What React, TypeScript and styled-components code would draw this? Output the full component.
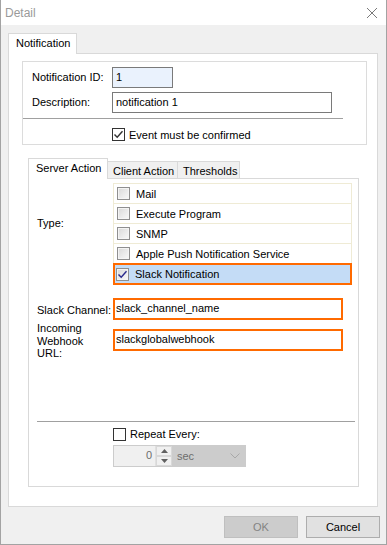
import React from "react";
import styled, { createGlobalStyle } from "styled-components";

const Global = createGlobalStyle`
  html, body { margin: 0; padding: 0; background: #ffffff; }
  body { font-family: "Liberation Sans", Arial, sans-serif; font-size: 11px; color: #000; }
  * { box-sizing: border-box; }
`;

const Window = styled.div`
  width: 387px;
  height: 545px;
  display: flex;
  flex-direction: column;
  border: 1px solid #a3a3a3;
  border-top: none;
  background: #f0f0f0;
  overflow: hidden;
`;

const TitleBar = styled.div`
  height: 25px;
  flex: none;
  background: #ffffff;
  display: flex;
  align-items: center;
  justify-content: space-between;
  padding: 0 8px 0 4px;
  color: #9a9a9a;
  font-size: 12px;
`;

const Body = styled.div`
  flex: 1;
  display: flex;
  flex-direction: column;
  padding: 8px 8px 6px 7px;
`;

const TabStrip = styled.div`
  display: flex;
  align-items: flex-end;
  height: 21px;
  margin-bottom: -1px;
  position: relative;
  z-index: 1;
`;

const Tab = styled.div<{ $active?: boolean; $w: number }>`
  width: ${(p) => p.$w}px;
  height: ${(p) => (p.$active ? 21 : 18)}px;
  background: ${(p) => (p.$active ? "#ffffff" : "#f0f0f0")};
  border: 1px solid #d9d9d9;
  border-bottom: ${(p) => (p.$active ? "none" : "1px solid #d9d9d9")};
  margin-left: ${(p) => (p.$active ? 0 : -1)}px;
  padding: ${(p) => (p.$active ? "3px 0 0 7px" : "3px 0 0 5px")};
  white-space: nowrap;
  font-size: 11px;
`;

const TabPage = styled.div<{ $h: number; $w: number }>`
  width: ${(p) => p.$w}px;
  height: ${(p) => p.$h}px;
  background: #ffffff;
  border: 1px solid #d9d9d9;
  display: flex;
  flex-direction: column;
`;

const OuterPage = styled(TabPage)`
  padding: 7px 0 0 13px;
`;

const GroupBox = styled.div`
  width: 345px;
  height: 84px;
  border: 1px solid #dcdcdc;
  padding-top: 5px;
  display: flex;
  flex-direction: column;
`;

const FieldRow = styled.div<{ $gap?: number }>`
  display: flex;
  align-items: center;
  padding-left: 9px;
  margin-top: ${(p) => p.$gap ?? 0}px;
`;

const Label = styled.div<{ $w: number }>`
  width: ${(p) => p.$w}px;
  flex: none;
  line-height: 12.5px;
`;

const TextBox = styled.div<{ $w: number; $bg?: string; $orange?: boolean }>`
  width: ${(p) => p.$w}px;
  height: ${(p) => (p.$orange ? 22 : 21)}px;
  border: ${(p) => (p.$orange ? "2px solid #ff6a00" : "1px solid #7a7a7a")};
  background: ${(p) => p.$bg ?? "#ffffff"};
  padding: ${(p) => (p.$orange ? "2px 0 0 1px" : "3px 0 0 3px")};
  white-space: nowrap;
  overflow: hidden;
`;

const Separator = styled.div<{ $w: number; $top: number; $left?: number }>`
  width: ${(p) => p.$w}px;
  height: 1px;
  background: #a0a0a0;
  margin-top: ${(p) => p.$top}px;
  margin-left: ${(p) => p.$left ?? 0}px;
`;

const CheckRow = styled.label<{ $left: number; $top: number }>`
  display: flex;
  align-items: center;
  gap: 4px;
  margin-left: ${(p) => p.$left}px;
  margin-top: ${(p) => p.$top}px;
  height: 13px;
  font-size: 11px;
`;

const Box = styled.span<{ $classic?: boolean }>`
  width: 13px;
  height: 13px;
  flex: none;
  display: inline-flex;
  align-items: center;
  justify-content: center;
  border: 1px solid ${(p) => (p.$classic ? "#8f8f8f" : "#333333")};
  background: ${(p) =>
    p.$classic
      ? "linear-gradient(135deg, #d8d8d8 0%, #ececec 60%, #f8f8f8 100%)"
      : "#ffffff"};
  box-shadow: ${(p) => (p.$classic ? "inset 0 0 0 1px #f4f4f4" : "none")};
`;

const Check = ({ color }: { color: string }) => (
  <svg width="11" height="11" viewBox="0 0 11 11">
    <path d="M1.5 5.5 L4.2 8.3 L9.5 2.2" fill="none" stroke={color} strokeWidth="1.4" />
  </svg>
);

const InnerWrap = styled.div`
  margin-left: 6px;
  margin-top: 13px;
  display: flex;
  flex-direction: column;
`;

const InnerPage = styled(TabPage)`
  padding: 4px 0 0 8px;
`;

const TypeRow = styled.div`
  display: flex;
  align-items: flex-start;
`;

const TypeLabel = styled(Label)`
  margin-top: 34px;
`;

const CheckList = styled.div`
  width: 239px;
  display: flex;
  flex-direction: column;
  border-top: 1px solid #efebd5;
`;

const ListItem = styled.div<{ $selected?: boolean }>`
  display: flex;
  align-items: center;
  gap: 6px;
  padding-left: ${(p) => (p.$selected ? 1 : 3)}px;
  border: ${(p) => (p.$selected ? "2px solid #ff6a00" : "1px solid #efebd5")};
  border-top: ${(p) => (p.$selected ? "2px solid #ff6a00" : "none")};
  margin-top: ${(p) => (p.$selected ? -1 : 0)}px;
  height: ${(p) => (p.$selected ? 22 : 20)}px;
  background: ${(p) => (p.$selected ? "#c4dcf6" : "#ffffff")};
`;

const InputRow = styled.div<{ $top: number }>`
  display: flex;
  align-items: flex-start;
  margin-top: ${(p) => p.$top}px;
`;

const CenterLabel = styled(Label)`
  margin-top: 6px;
`;

const OffsetBox = styled.div<{ $top: number }>`
  margin-top: ${(p) => p.$top}px;
`;

const SpinRow = styled.div`
  display: flex;
  margin-left: 76px;
  margin-top: 4px;
  height: 22px;
`;

const Numeric = styled.div`
  width: 60px;
  height: 22px;
  border: 1px solid #cccccc;
  background: #f0f0f0;
  display: flex;
  color: #6d6d6d;
`;

const NumValue = styled.div`
  flex: 1;
  text-align: right;
  padding: 3px 3px 0 0;
`;

const Spinner = styled.div`
  width: 17px;
  display: flex;
  flex-direction: column;
  border-left: 1px solid #e0e0e0;
`;

const SpinBtn = styled.div`
  flex: 1;
  display: flex;
  align-items: center;
  justify-content: center;
  background: #f0f0f0;
  border: 1px solid #d8d8d8;
`;

const Combo = styled.div`
  width: 73px;
  height: 22px;
  background: #cccccc;
  border: 1px solid #cccccc;
  display: flex;
  align-items: center;
  justify-content: space-between;
  padding: 0 5px 0 3px;
  color: #6d6d6d;
`;

const ButtonRow = styled.div`
  display: flex;
  justify-content: flex-end;
  gap: 8px;
  margin-top: 9px;
  margin-right: -2px;
`;

const Button = styled.button<{ $disabled?: boolean }>`
  width: 74px;
  height: 22px;
  font-family: "Liberation Sans", Arial, sans-serif;
  font-size: 11px;
  padding: 0;
  background: ${(p) => (p.$disabled ? "#cccccc" : "#e1e1e1")};
  border: 1px solid ${(p) => (p.$disabled ? "#bfbfbf" : "#adadad")};
  color: ${(p) => (p.$disabled ? "#838383" : "#000000")};
`;

const items = ["Mail", "Execute Program", "SNMP", "Apple Push Notification Service"];

export default function App() {
  return (
    <>
      <Global />
      <Window>
        <TitleBar>
          <span>Detail</span>
          <svg width="12" height="12" viewBox="0 0 12 12">
            <path d="M1 1 L11 11 M11 1 L1 11" stroke="#7a7a7a" strokeWidth="1" />
          </svg>
        </TitleBar>
        <Body>
          <TabStrip>
            <Tab $active $w={69}>Notification</Tab>
          </TabStrip>
          <OuterPage $w={370} $h={454}>
            <GroupBox>
              <FieldRow>
                <Label $w={80}>Notification ID:</Label>
                <TextBox $w={61} $bg="#eaf2fd">1</TextBox>
              </FieldRow>
              <FieldRow $gap={4}>
                <Label $w={80}>Description:</Label>
                <TextBox $w={220}>notification 1</TextBox>
              </FieldRow>
              <Separator $w={320} $top={5} />
              <CheckRow $left={89} $top={9}>
                <Box>
                  <Check color="#333333" />
                </Box>
                Event must be confirmed
              </CheckRow>
            </GroupBox>
            <InnerWrap>
              <TabStrip>
                <Tab $active $w={80}>Server Action</Tab>
                <Tab $w={71}>Client Action</Tab>
                <Tab $w={63}>Thresholds</Tab>
              </TabStrip>
              <InnerPage $w={331} $h={309}>
                <TypeRow>
                  <TypeLabel $w={76}>Type:</TypeLabel>
                  <CheckList>
                    {items.map((t) => (
                      <ListItem key={t}>
                        <Box $classic />
                        {t}
                      </ListItem>
                    ))}
                    <ListItem $selected>
                      <Box $classic>
                        <Check color="#2a2a8c" />
                      </Box>
                      Slack Notification
                    </ListItem>
                  </CheckList>
                </TypeRow>
                <InputRow $top={13}>
                  <CenterLabel $w={76}>Slack Channel:</CenterLabel>
                  <TextBox $w={230} $orange>slack_channel_name</TextBox>
                </InputRow>
                <InputRow $top={2}>
                  <Label $w={76}>
                    Incoming
                    <br />
                    Webhook
                    <br />
                    URL:
                  </Label>
                  <OffsetBox $top={7}>
                    <TextBox $w={230} $orange>slackglobalwebhook</TextBox>
                  </OffsetBox>
                </InputRow>
                <Separator $w={318} $top={61} />
                <CheckRow $left={76} $top={6}>
                  <Box />
                  Repeat Every:
                </CheckRow>
                <SpinRow>
                  <Numeric>
                    <NumValue>0</NumValue>
                    <Spinner>
                      <SpinBtn>
                        <svg width="7" height="4" viewBox="0 0 7 4">
                          <path d="M0 4 L3.5 0 L7 4 Z" fill="#606060" />
                        </svg>
                      </SpinBtn>
                      <SpinBtn>
                        <svg width="7" height="4" viewBox="0 0 7 4">
                          <path d="M0 0 L3.5 4 L7 0 Z" fill="#606060" />
                        </svg>
                      </SpinBtn>
                    </Spinner>
                  </Numeric>
                  <Combo>
                    <span>sec</span>
                    <svg width="10" height="6" viewBox="0 0 10 6">
                      <path d="M0.5 0.5 L5 5 L9.5 0.5" fill="none" stroke="#a8a8a8" strokeWidth="1" />
                    </svg>
                  </Combo>
                </SpinRow>
              </InnerPage>
            </InnerWrap>
          </OuterPage>
          <ButtonRow>
            <Button $disabled>OK</Button>
            <Button>Cancel</Button>
          </ButtonRow>
        </Body>
      </Window>
    </>
  );
}
